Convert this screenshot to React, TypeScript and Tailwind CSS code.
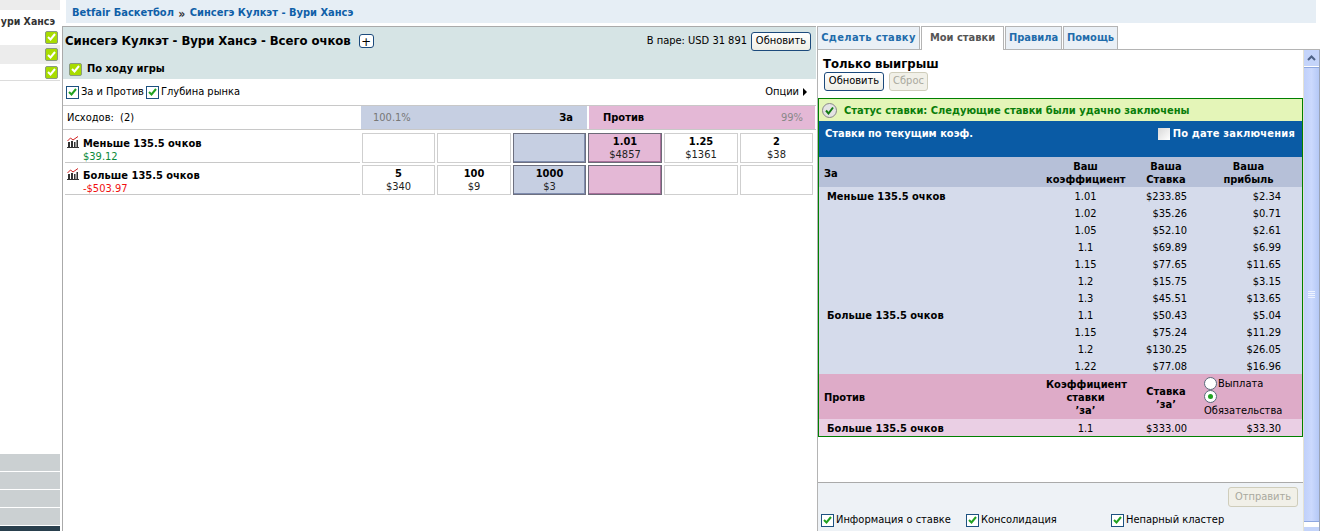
import type { ReactNode } from 'react'

const backRows = [
  ['Меньше 135.5 очков', '1.01', '$233.85', '$2.34'],
  ['', '1.02', '$35.26', '$0.71'],
  ['', '1.05', '$52.10', '$2.61'],
  ['', '1.1', '$69.89', '$6.99'],
  ['', '1.15', '$77.65', '$11.65'],
  ['', '1.2', '$15.75', '$3.15'],
  ['', '1.3', '$45.51', '$13.65'],
  ['Больше 135.5 очков', '1.1', '$50.43', '$5.04'],
  ['', '1.15', '$75.24', '$11.29'],
  ['', '1.2', '$130.25', '$26.05'],
  ['', '1.22', '$77.08', '$16.96'],
]

const betGrid = 'grid grid-cols-[227px_79px_82px_95px] items-center'

function LimeCheck() {
  return (
    <span className="flex h-[13px] w-[13px] shrink-0 items-center justify-center rounded-[2px] border border-[#8a9a80] bg-[#a8dc00]">
      <svg width="9" height="8" viewBox="0 0 9 8">
        <path d="M1 4l2.5 2.5L8 1" fill="none" stroke="#fff" strokeWidth="2" />
      </svg>
    </span>
  )
}

function BlueCheck({ label }: { label: string }) {
  return (
    <span className="flex items-center gap-[2px]">
      <span className="flex h-[13px] w-[13px] shrink-0 items-center justify-center border border-[#1c5180] bg-white">
        <svg width="9" height="8" viewBox="0 0 9 8">
          <path d="M1 4l2.5 2.5L8 1" fill="none" stroke="#21a121" strokeWidth="2" />
        </svg>
      </span>
      {label}
    </span>
  )
}

function Btn({ children, disabled, className = '' }: { children: ReactNode; disabled?: boolean; className?: string }) {
  return (
    <button
      className={`flex h-[19px] items-center justify-center rounded-[3px] border text-[11px] ${
        disabled
          ? 'border-[#cfcdbb] bg-[#f1f0e8] text-[#a9a99e]'
          : 'border-[#1c4a7c] bg-gradient-to-b from-white to-[#eeeee6] text-black'
      } ${className}`}
    >
      {children}
    </button>
  )
}

function ChartIcon() {
  return (
    <svg width="12" height="12" viewBox="0 0 12 12" className="-mt-px shrink-0">
      <path d="M0.5 5L3.5 2l2.5 2L11 0.5" fill="none" stroke="#d02020" strokeWidth="1" />
      <path d="M1 6h2v5H1zM4 5h2v6H4zM7 6h1.5v5H7zM9.5 4H11v7H9.5z" fill="#333" />
      <path d="M0 11.5h12" stroke="#333" strokeWidth="1" />
    </svg>
  )
}

function PriceCell({ odds, size, tone }: { odds?: string; size?: string; tone?: 'back' | 'lay' }) {
  const styles =
    tone === 'back'
      ? 'border border-[#6d7080] bg-[#c6cfe2] shadow-[inset_-1px_-1px_0_#7f8cae]'
      : tone === 'lay'
        ? 'border border-[#6d6a78] bg-[#e4b8d6] shadow-[inset_-1px_-1px_0_#a8709a]'
        : 'border border-[#cfcfcf] bg-white'

  return (
    <div className={`flex h-[30px] flex-col items-center justify-center leading-[13px] ${styles}`}>
      {odds && <span className="text-[11px] font-bold">{odds}</span>}
      {size && <span className="text-[11px] text-[#222]">{size}</span>}
    </div>
  )
}

function RunnerRow({ name, pl, plColor, cells }: { name: string; pl: string; plColor: string; cells: ReactNode }) {
  return (
    <div className="flex h-[32px] items-start">
      <div className="ml-[2px] flex h-[32px] w-[295px] gap-[4px] border-b border-[#c8c8c8] pl-[2px] pt-[6px]">
        <ChartIcon />
        <div className="leading-[13px]">
          <div className="text-[11px] font-bold">{name}</div>
          <div className={`text-[11px] ${plColor}`}>{pl}</div>
        </div>
      </div>
      <div className="ml-[2px] mt-[2px] grid w-[451px] grid-cols-[73px_74px_73px_74px_74px_73px] gap-[2px]">{cells}</div>
    </div>
  )
}

function Tab({ label, width, active, className = '' }: { label: string; width: string; active?: boolean; className?: string }) {
  return (
    <div
      className={`flex items-center justify-center border border-[#b4b4b4] text-[11px] font-bold ${width} ${
        active
          ? 'relative z-10 -mb-px h-[24px] border-b-0 bg-white text-[#555]'
          : 'h-[23px] border-b-0 bg-[#eaf0f6] text-[#1f6cab]'
      } ${className}`}
    >
      {label}
    </div>
  )
}

export default function App() {
  return (
    <div className="flex h-[531px] w-[1327px] overflow-hidden bg-white font-['DejaVu_Sans_Condensed','DejaVu_Sans',sans-serif] text-[11px] text-black">
      <aside className="flex h-full w-[60px] shrink-0 flex-col">
        <div className="h-[10px] bg-[#ececec]" />
        <div className="flex h-[19px] items-center justify-end whitespace-nowrap pr-[5px] pt-[4px] text-[10.5px] font-bold text-[#333]">
          ури Хансэ
        </div>
        <div className="flex h-[16px] items-center justify-end pr-[2px]">
          <LimeCheck />
        </div>
        <div className="flex h-[19px] items-center justify-end bg-[#ececec] pr-[2px]">
          <LimeCheck />
        </div>
        <div className="flex h-[17px] items-center justify-end border-b border-[#dcdcdc] pr-[2px]">
          <LimeCheck />
        </div>
        <div className="flex-1" />
        <div className="flex flex-col gap-px">
          <div className="h-[17px] bg-[#cbd0d2]" />
          <div className="h-[17px] bg-[#cbd0d2]" />
          <div className="h-[17px] bg-[#cbd0d2]" />
          <div className="h-[17px] bg-[#cbd0d2]" />
          <div className="h-[5px] bg-[#293f4d]" />
        </div>
      </aside>

      <div className="ml-[2px] flex min-w-0 flex-1 flex-col">
        <div className="ml-[4px] mr-[11px] flex h-[23px] items-center whitespace-pre bg-[#e6eef5] pl-[6px] pt-[4px] text-[11px] font-bold text-[#0f5fa8]">
          Betfair Баскетбол <span className="mx-px text-[12px] text-[#333]">»</span> Синсегэ Кулкэт - Вури Хансэ
        </div>

        <div className="mt-[3px] flex min-h-0 flex-1">
          <main className="w-[754px] shrink-0 border-l border-t border-[#aaaaaa]">
            <div className="h-[52px] bg-[#d6e4e5]">
              <div className="flex h-[28px] items-center pl-[2px] pr-[5px]">
                <span className="text-[13px] font-bold tracking-[-0.05px]">Синсегэ Кулкэт - Вури Хансэ - Всего очков</span>
                <span className="ml-[8px] flex h-[14px] w-[15px] items-center justify-center rounded-[3px] border border-[#1c4a7c] bg-white text-[13px] leading-none">
                  +
                </span>
                <span className="ml-auto mr-[4px]">В паре: USD 31 891</span>
                <Btn className="w-[60px]">Обновить</Btn>
              </div>
              <div className="flex items-center gap-[5px] pl-[6px] pt-[6px] font-bold">
                <LimeCheck />
                По ходу игры
              </div>
            </div>

            <div className="flex h-[27px] items-center gap-[2px] border-b border-[#c8c8c8] pl-[3px] pr-[9px]">
              <BlueCheck label="За и Против" />
              <BlueCheck label="Глубина рынка" />
              <span className="ml-auto flex items-center gap-[4px]">
                Опции
                <span className="h-0 w-0 border-y-[4px] border-l-[4px] border-y-transparent border-l-black" />
              </span>
            </div>

            <div className="flex h-[24px] items-center border-b border-[#c8c8c8]">
              <div className="w-[298px] pl-[4px] pt-[2px]">Исходов:&nbsp; (2)</div>
              <div className="flex h-full w-[226px] items-center justify-between bg-[#c6cfe2] pl-[12px] pr-[14px] pt-[2px]">
                <span className="text-[#777]">100.1%</span>
                <span className="font-bold">За</span>
              </div>
              <div className="ml-[2px] flex h-full w-[226px] items-center justify-between bg-[#e4b8d6] pl-[14px] pr-[12px] pt-[2px]">
                <span className="font-bold">Против</span>
                <span className="text-[#888]">99%</span>
              </div>
            </div>

            <div className="mt-px">
              <RunnerRow
                name="Меньше 135.5 очков"
                pl="$39.12"
                plColor="text-[#0a8a3a]"
                cells={
                  <>
                    <PriceCell />
                    <PriceCell />
                    <PriceCell tone="back" />
                    <PriceCell tone="lay" odds="1.01" size="$4857" />
                    <PriceCell odds="1.25" size="$1361" />
                    <PriceCell odds="2" size="$38" />
                  </>
                }
              />
              <RunnerRow
                name="Больше 135.5 очков"
                pl="-$503.97"
                plColor="text-[#f01010]"
                cells={
                  <>
                    <PriceCell odds="5" size="$340" />
                    <PriceCell odds="100" size="$9" />
                    <PriceCell tone="back" odds="1000" size="$3" />
                    <PriceCell tone="lay" />
                    <PriceCell />
                    <PriceCell />
                  </>
                }
              />
            </div>
          </main>

          <section className="flex w-[504px] shrink-0 flex-col">
            <div className="flex h-[23px] items-end gap-px pl-px">
              <Tab label="Сделать ставку" width="w-[103px]" className="tracking-[0.4px]" />
              <Tab label="Мои ставки" width="w-[83px]" active />
              <Tab label="Правила" width="w-[57px]" />
              <Tab label="Помощь" width="w-[55px]" />
            </div>
            <div className="ml-px flex min-h-0 flex-1 border-l border-t border-[#b4b4b4]">
              <div className="flex min-w-0 flex-1 flex-col">
                <div className="flex-1">
                  <div className="h-[48px] pl-[5px] pt-[6px]">
                    <div className="text-[13px] font-bold leading-[15px]">Только выигрыш</div>
                    <div className="mt-[1px] flex gap-[5px] pl-px">
                      <Btn className="w-[60px]">Обновить</Btn>
                      <Btn disabled className="w-[39px]">
                        Сброс
                      </Btn>
                    </div>
                  </div>

                  <div className="border border-[#008000]">
                    <div className="flex h-[22px] items-center gap-[7px] bg-[#e4f5b8] pl-[3px] font-bold text-[#0a7d0a]">
                      <svg width="15" height="15" viewBox="0 0 15 15">
                        <circle cx="7.5" cy="7.5" r="7" fill="#e4e4e4" stroke="#888" />
                        <path d="M4 7.5l2.5 3L11 4.5" fill="none" stroke="#127a12" strokeWidth="2" />
                      </svg>
                      <span className="pt-[2px]">Статус ставки: Следующие ставки были удачно заключены</span>
                    </div>
                    <div className="flex h-[36px] items-start justify-between bg-[#0a5ba5] pl-[6px] pr-[7px] pt-[5px] font-bold text-white">
                      <span>Ставки по текущим коэф.</span>
                      <span className="flex items-center gap-[3px] tracking-[0.2px]">
                        <span className="h-[12px] w-[12px] bg-gradient-to-br from-[#d8d8d8] to-white" />
                        По дате заключения
                      </span>
                    </div>

                    <div className={`${betGrid} h-[30px] bg-[#b6c0d8] pt-[2px] font-bold leading-[13px]`}>
                      <span className="pl-[5px]">За</span>
                      <span className="text-center">
                        Ваш
                        <br />
                        коэффициент
                      </span>
                      <span className="text-center">
                        Ваша
                        <br />
                        Ставка
                      </span>
                      <span className="pr-[12px] text-center">
                        Ваша
                        <br />
                        прибыль
                      </span>
                    </div>

                    <div className="bg-[#d5dbeb]">
                      {backRows.map((row) => (
                        <div key={row[1] + row[2]} className={`${betGrid} h-[17px] pt-[2px]`}>
                          <span className="pl-[8px] font-bold">{row[0]}</span>
                          <span className="text-center">{row[1]}</span>
                          <span className="pr-[20px] text-right">{row[2]}</span>
                          <span className="pr-[21px] text-right">{row[3]}</span>
                        </div>
                      ))}
                    </div>

                    <div className={`${betGrid} h-[45px] bg-[#deabc8] pt-[2px] font-bold leading-[13px]`}>
                      <span className="pl-[5px]">Против</span>
                      <span className="text-center">
                        Коэффициент
                        <br />
                        ставки
                        <br />
                        ’за’
                      </span>
                      <span className="text-center">
                        Ставка
                        <br />
                        ’за’
                      </span>
                      <span className="-ml-[3px] self-start pt-px font-normal">
                        <span className="flex items-center gap-px">
                          <span className="h-[13px] w-[13px] rounded-full border border-[#5a6a7a] bg-white" />
                          Выплата
                        </span>
                        <span className="flex h-[13px] w-[13px] items-center justify-center rounded-full border border-[#5a6a7a] bg-white">
                          <span className="h-[5px] w-[5px] rounded-full bg-[#21a121]" />
                        </span>
                        <span className="mt-px block">Обязательства</span>
                      </span>
                    </div>
                    <div className={`${betGrid} h-[17px] bg-[#eacfe4] pt-[2px]`}>
                      <span className="pl-[8px] font-bold">Больше 135.5 очков</span>
                      <span className="text-center">1.1</span>
                      <span className="pr-[20px] text-right">$333.00</span>
                      <span className="pr-[21px] text-right">$33.30</span>
                    </div>
                  </div>
                </div>

                <div className="h-[49px] border-t border-[#aaaaaa] bg-[#eef2f6]">
                  <div className="flex justify-end pr-[5px] pt-[4px]">
                    <Btn disabled className="h-[20px] w-[70px]">
                      Отправить
                    </Btn>
                  </div>
                  <div className="mt-[5px] grid grid-cols-[145px_145px_1fr] pl-[3px]">
                    <BlueCheck label="Информация о ставке" />
                    <BlueCheck label="Консолидация" />
                    <BlueCheck label="Непарный кластер" />
                  </div>
                </div>
              </div>

              <div className="flex w-[17px] shrink-0 flex-col border-x border-[#e4e2d4] border-r-[#9aa4b8]">
                <div className="flex h-[16px] items-center justify-center bg-[#c4d4fa]">
                  <svg width="9" height="6" viewBox="0 0 9 6">
                    <path d="M1 5l3.5-3.5L8 5" fill="none" stroke="#4d6185" strokeWidth="2" />
                  </svg>
                </div>
                <div className="relative mt-px flex flex-1 items-center justify-center border-y border-[#8fa8e0] bg-gradient-to-r from-[#c0d0fa] via-[#cbd9fd] to-[#b4c8f6]">
                  <svg width="7" height="8" viewBox="0 0 7 8">
                    <path d="M0 .5h7M0 2.5h7M0 4.5h7M0 6.5h7" stroke="#eef3ff" strokeWidth="1" />
                  </svg>
                </div>
                <div className="mt-[5px] h-[4px] bg-[#c4d4fa]" />
              </div>
            </div>
          </section>
        </div>
      </div>
    </div>
  )
}
